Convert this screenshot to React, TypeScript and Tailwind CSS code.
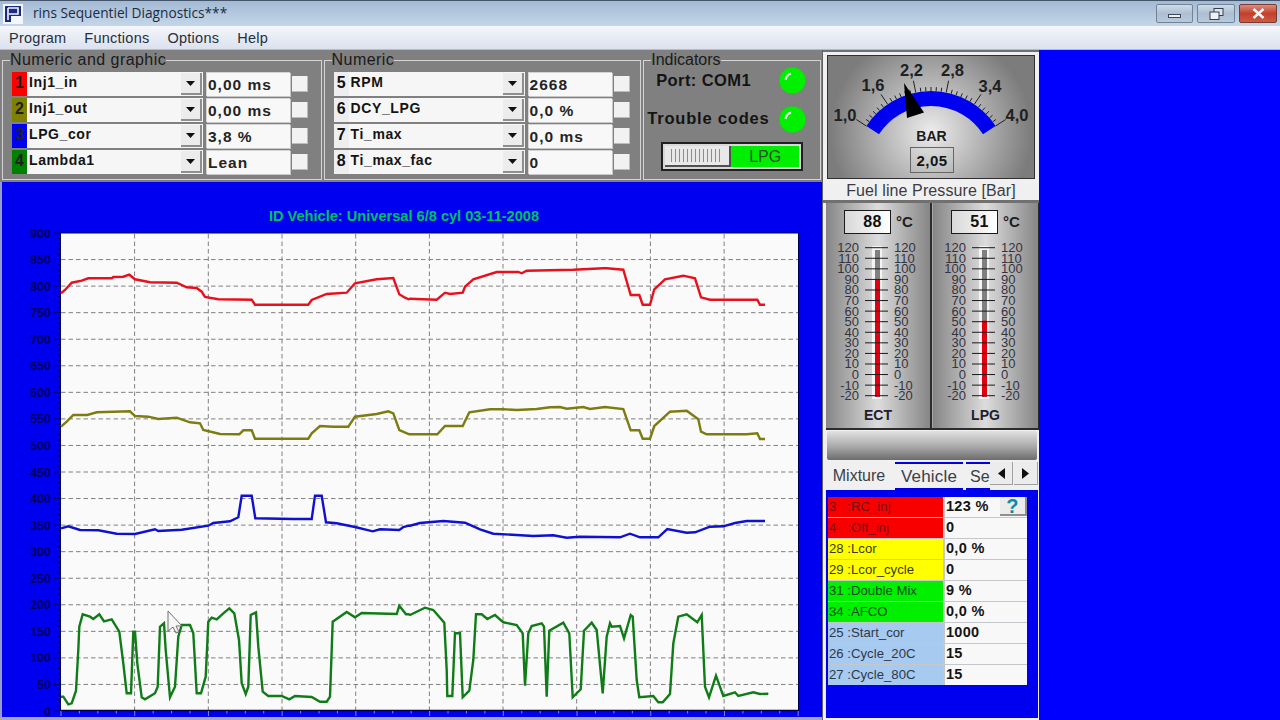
import React from "react";

const F = "font-['Liberation_Sans',Arial,sans-serif]";

// chart traces, stored as crop coordinates (x/3, base + y/3)
type P = [number, number][];
const L = (pts: P, base: number) => pts.map(([x, y]) => `${(x / 3).toFixed(1)},${(base + y / 3).toFixed(1)}`);
const R = (pts: P, base: number) => pts.map(([x, y]) => `${(410 + x / 3).toFixed(1)},${(base + y / 3).toFixed(1)}`);

const red = [
  ...L([[183,280],[195,270],[215,248],[245,242],[265,235],[335,235],[340,231],[370,230],[388,224],[405,238],[450,247],[530,248],[560,262],[590,264],[605,275],[615,291],[655,298],[755,299],[765,314],[925,314],[935,300],[980,282],[1040,278],[1065,250],[1130,238],[1180,234],[1198,283],[1215,293],[1226,298]], 200),
  ...R([[0,296],[80,299],[105,278],[120,282],[158,278],[165,260],[190,238],[260,216],[325,216],[335,220],[350,212],[490,209],[580,205],[590,205],[640,209],[662,285],[688,285],[698,314],[720,314],[733,268],[765,238],[820,227],[855,235],[873,292],[900,299],[1042,299],[1050,314],[1065,314]], 200),
].join(" ");

const olive = [
  ...L([[183,680],[200,665],[220,645],[262,645],[290,637],[390,634],[405,648],[445,650],[475,657],[530,653],[570,667],[600,670],[610,690],[660,702],[718,703],[730,691],[755,691],[765,716],[925,716],[935,700],[960,678],[1000,680],[1045,680],[1065,650],[1130,642],[1165,634],[1180,640],[1198,690],[1226,702]], 200),
  ...R([[0,703],[82,703],[105,678],[158,678],[178,637],[240,628],[280,628],[320,630],[380,627],[420,622],[450,621],[470,626],[520,621],[540,627],[585,621],[640,627],[662,691],[688,691],[698,716],[720,716],[733,678],[780,635],[830,632],[865,658],[873,695],[890,703],[1010,703],[1042,700],[1050,717],[1065,717]], 200),
].join(" ");

const blue = [
  ...L([[183,205],[205,199],[240,210],[295,211],[350,221],[405,222],[465,208],[475,213],[545,209],[625,197],[640,189],[690,184],[715,172],[725,107],[755,107],[766,175],[880,177],[935,177],[945,107],[965,107],[978,187],[1010,190],[1065,201],[1118,214],[1140,208],[1198,210],[1210,201],[1226,197]], 460),
  ...R([[0,197],[30,189],[100,183],[165,188],[210,208],[250,221],[370,228],[430,226],[470,233],[510,230],[630,232],[660,221],[690,232],[745,232],[772,207],[830,218],[855,217],[900,200],[940,199],[975,189],[1010,183],[1065,183]], 460),
].join(" ");

const green = [
  ...L([[183,710],[190,710],[205,733],[215,730],[228,692],[235,570],[238,500],[248,463],[270,470],[280,477],[298,463],[312,484],[335,478],[358,515],[370,610],[380,700],[393,700],[400,515],[405,515],[412,610],[425,712],[435,718],[465,700],[473,680],[480,500],[492,490],[497,570],[510,712],[525,680],[535,530],[545,495],[570,495],[580,520],[590,700],[603,700],[617,650],[625,485],[635,473],[650,478],[670,460],[688,445],[703,460],[717,540],[725,670],[737,702],[745,680],[752,465],[768,457],[775,560],[788,695],[805,708],[845,708],[868,718],[885,708],[935,711],[960,725],[980,725],[990,710],[995,570],[998,485],[1040,456],[1065,472],[1085,459],[1190,462],[1198,437],[1218,463],[1226,463]], 460),
  ...R([[0,465],[45,443],[70,450],[103,488],[110,630],[112,708],[127,708],[135,520],[150,520],[158,712],[178,692],[190,600],[198,463],[215,463],[232,477],[255,465],[280,487],[320,495],[338,520],[345,677],[355,520],[365,498],[395,490],[402,500],[410,710],[418,512],[460,488],[478,520],[488,712],[512,688],[522,512],[545,488],[560,510],[578,700],[590,530],[600,490],[605,500],[630,498],[642,535],[662,465],[668,470],[680,660],[688,712],[730,708],[745,727],[758,727],[780,702],[790,550],[805,470],[830,463],[862,487],[875,465],[885,680],[897,712],[918,647],[940,708],[975,697],[985,708],[1030,697],[1050,702],[1075,701]], 460),
].join(" ");

const yVal = (v: number) => 711 - (v / 900) * 478;
const gridX = [134.6, 208.3, 282, 355.7, 429.4, 503, 576.7, 650.4, 724.1];

function Chart() {
  const ys = Array.from({ length: 19 }, (_, i) => i * 50);
  return (
    <svg viewBox="0 182 822 535" className="block h-[535px] w-[822px]">
      <text x="404" y="220.5" textAnchor="middle" fontFamily="'Liberation Sans',Arial,sans-serif" fontWeight="700" fontSize="14.6" fill="#00c060">
        ID Vehicle: Universal 6/8 cyl 03-11-2008
      </text>
      <rect x="61" y="233" width="737" height="477" fill="#fafafa" />
      {ys.slice(1, 18).map((v) => (
        <line key={v} x1="61" x2="798" y1={yVal(v)} y2={yVal(v)} stroke="#808080" strokeWidth="1" strokeDasharray="4.5 3" />
      ))}
      {gridX.map((x) => (
        <line key={x} x1={x} x2={x} y1="234" y2="710" stroke="#808080" strokeWidth="1" strokeDasharray="4.5 3" />
      ))}
      <path d="M60.5 710V233H798.5V710" fill="none" stroke="#000050" strokeWidth="1" />
      <line x1="60" x2="799" y1="710.5" y2="710.5" stroke="#000040" strokeWidth="1.5" />
      {Array.from({ length: 91 }, (_, i) => {
        const y = 711 - (i * 478) / 90;
        return <line key={i} x1={i % 5 === 0 ? 54 : 57} x2="61" y1={y} y2={y} stroke="#000060" strokeWidth="1" />;
      })}
      {ys.map((v) => (
        <text key={v} x="51" y={yVal(v) + 4.5} textAnchor="end" fontFamily="'Liberation Sans',Arial,sans-serif" fontWeight="700" fontSize="12.5" fill="#000060">
          {v}
        </text>
      ))}
      {Array.from({ length: 41 }, (_, i) => {
        const x = 61 + i * 18.43;
        return <line key={i} x1={x} x2={x} y1="711" y2={i % 4 === 0 ? 716 : 713.5} stroke="#8080ff" strokeWidth="1" />;
      })}
      <polyline points={red} fill="none" stroke="#e8101c" strokeWidth="2.4" />
      <polyline points={olive} fill="none" stroke="#7c7c10" strokeWidth="2.4" />
      <polyline points={blue} fill="none" stroke="#1010d0" strokeWidth="2.4" />
      <polyline points={green} fill="none" stroke="#107c18" strokeWidth="2.4" />
      <path d="M168 611L168 631L173 627L176 633L179 632L176 626L182 626Z" fill="#f4f4f4" fillOpacity="0.7" stroke="#707070" strokeWidth="1" />
    </svg>
  );
}

function Combo({ idx, color, name, value, dark }: { idx: string; color: string; name: string; value: string; dark?: boolean }) {
  return (
    <div className="flex h-[24px] items-stretch">
      <div className={`flex w-[15px] items-center justify-center pb-[2px] text-[16px] font-bold ${color} ${dark ? "text-[#101010]" : "text-[#202020]"}`}>{idx}</div>
      <div className="flex w-[176px] items-center justify-between bg-[#f6f6f6] pl-[2px] pr-[1px]">
        <span className="pb-[3px] text-[14px] font-bold tracking-[0.6px] text-[#141414]">{name}</span>
        <div className="flex h-[22px] w-[21px] items-center justify-center border-r-2 border-b-2 border-[#8e8e8e] bg-[#ececec]">
          <svg width="9" height="5" viewBox="0 0 9 5"><path d="M0 0H9L4.5 5Z" fill="#101010" /></svg>
        </div>
      </div>
      <div className="ml-[3px] flex w-[84px] items-center border-t border-l border-[#d4d4d4] bg-[#f8f8f8] pl-[1px] text-[15.5px] font-bold tracking-[1px] text-[#242424] shadow-[1px_1px_0_#c8c8c8]">
        {value}
      </div>
      <div className="ml-[2px] flex items-center">
        <div className="h-[16px] w-[16px] border-r border-b border-[#bdbdbd] bg-[#f2f2f2]" />
      </div>
    </div>
  );
}

function Group({ title, width, children, tracking }: { title: string; width: string; children: React.ReactNode; tracking?: string }) {
  return (
    <div className={`relative h-[120px] border border-[#d4d4d4] ${width}`}>
      <span className={`absolute top-[-10px] left-[7px] bg-[#808080] text-[16px] leading-[18px] text-[#1a1a1a] ${tracking ?? ""}`}>{title}</span>
      {children}
    </div>
  );
}

function Led() {
  return (
    <svg width="29" height="29" viewBox="0 0 29 29">
      <circle cx="14.5" cy="14.5" r="13.5" fill="#00f000" stroke="#5c9a5c" strokeWidth="1" />
      <path d="M7.5 14C8 11 10 8.5 13 7.5" fill="none" stroke="#f0fff0" strokeWidth="2.2" />
    </svg>
  );
}

function Gauge() {
  const cx = 931, cy = 168;
  const pol = (deg: number, r: number) => {
    const a = (deg * Math.PI) / 180;
    return [cx + r * Math.sin(a), cy - r * Math.cos(a)];
  };
  const [ax, ay] = pol(-57, 69.5);
  const [bx, by] = pol(57, 69.5);
  const labels: [string, number, number][] = [
    ["1,0", 845, 121], ["1,6", 873, 91], ["2,2", 911.5, 76], ["2,8", 952.5, 76], ["3,4", 990, 92], ["4,0", 1017, 121],
  ];
  return (
    <svg viewBox="827 55 208 124" className="block h-[124px] w-[208px]" fontFamily="'Liberation Sans',Arial,sans-serif">
      <path d={`M${ax} ${ay}A69.5 69.5 0 0 1 ${bx} ${by}`} fill="none" stroke="#0000f0" strokeWidth="15" />
      {Array.from({ length: 31 }, (_, i) => {
        const d = -57 + i * 3.8;
        const major = i % 6 === 0;
        const [x1, y1] = pol(d, 77);
        const [x2, y2] = pol(d, major ? 89 : 81);
        return <line key={i} x1={x1} y1={y1} x2={x2} y2={y2} stroke="#202020" strokeWidth="1" />;
      })}
      {labels.map(([t, x, y]) => (
        <text key={t} x={x} y={y} textAnchor="middle" fontWeight="700" fontSize="16.5" fill="#202020">{t}</text>
      ))}
      <polygon points="904,83 907,118 924,112.5" fill="#000" />
      <text x="931.5" y="141" textAnchor="middle" fontWeight="700" fontSize="14" fill="#1c1c1c">BAR</text>
      <rect x="910.5" y="147.5" width="43" height="25" fill="none" stroke="#666" strokeWidth="1" />
      <text x="932" y="165.5" textAnchor="middle" fontWeight="700" fontSize="15" letterSpacing="0.5" fill="#141414">2,05</text>
    </svg>
  );
}

function Thermo({ val, top, name, w }: { val: string; top: number; name: string; w: string }) {
  const ticks = [120, 110, 100, 90, 80, 70, 60, 50, 40, 30, 20, 10, 0, -10, -20];
  const yOf = (i: number) => 44.7 + (i * 148) / 14;
  return (
    <div className={`flex h-[225px] flex-col bg-[linear-gradient(90deg,#868686,#dcdcdc_50%,#868686)] ${w}`}>
      <div className="flex h-[31px] items-end pl-[18px]">
        <div className="flex h-[24px] w-[47px] items-center justify-end border border-[#1a1a1a] bg-[linear-gradient(90deg,#d8d8d8,#ffffff)] pr-[8px] text-[16px] font-bold tracking-[0.5px] text-[#101010]">{val}</div>
        <span className="ml-[5px] h-[24px] text-[15px] leading-[24px] font-bold text-[#202020]">°C</span>
      </div>
      <svg viewBox="0 31 104 171" className="block h-[171px] w-[104px]" fontFamily="'Liberation Sans',Arial,sans-serif">
        <rect x="46" y="43" width="10" height="153" fill="#f4f4f4" />
        <rect x="49" y="47" width="5" height="147" fill="#808080" />
        <rect x="49" y={top} width="5" height={193.5 - top} fill="#e00010" />
        {ticks.map((t, i) => (
          <g key={t}>
            <line x1="39" x2="62" y1={yOf(i)} y2={yOf(i)} stroke="#1a1a1a" strokeWidth="1" />
            <text x="33" y={yOf(i) + 4.5} textAnchor="end" fontSize="13" fill="#343440">{t}</text>
            <text x="68" y={yOf(i) + 4.5} fontSize="13" fill="#343440">{t}</text>
          </g>
        ))}
      </svg>
      <div className="text-center text-[14px] leading-[20px] font-bold text-[#20202c]">{name}</div>
    </div>
  );
}

const rows = [
  { a: "3   :RC_inj", b: "123 %", c: "bg-[#f80000]", t: "text-[#7a1010]", help: true },
  { a: "4   :Off_inj", b: "0", c: "bg-[#f80000]", t: "text-[#7a1010]" },
  { a: "28 :Lcor", b: "0,0 %", c: "bg-[#ffff00]", t: "text-[#3a3a10]" },
  { a: "29 :Lcor_cycle", b: "0", c: "bg-[#ffff00]", t: "text-[#3a3a10]" },
  { a: "31 :Double Mix", b: "9 %", c: "bg-[#00f000]", t: "text-[#184a20]" },
  { a: "34 :AFCO", b: "0,0 %", c: "bg-[#00f000]", t: "text-[#184a20]" },
  { a: "25 :Start_cor", b: "1000", c: "bg-[#a6caf0]", t: "text-[#303848]" },
  { a: "26 :Cycle_20C", b: "15", c: "bg-[#a6caf0]", t: "text-[#303848]" },
  { a: "27 :Cycle_80C", b: "15", c: "bg-[#a6caf0]", t: "text-[#303848]" },
];

export default function App() {
  return (
    <div className={`flex h-[720px] w-[1280px] flex-col overflow-hidden bg-[#0000ff] ${F}`}>
      {/* title bar */}
      <div className="flex h-[26px] items-center border-t border-[#45566a] bg-[linear-gradient(180deg,#a3bad4,#c4d6e9)]">
        <div className="ml-[3px] flex h-[20px] w-[20px] items-center justify-center bg-[#f4f6fa]">
          <svg width="18" height="18" viewBox="0 0 18 18">
            <path d="M1 1H17V11H7V17H1Z" fill="#1c2a80" />
            <path d="M4 3V15M4 3H14V9H5" fill="none" stroke="#f4f6fa" strokeWidth="1.6" />
          </svg>
        </div>
        <span className="ml-[10px] font-['Open_Sans',sans-serif] text-[13.7px] text-[#1c2c3e]">rins Sequentiel Diagnostics***</span>
        <div className="ml-auto mr-[3px] flex gap-[4px]">
          <div className="flex h-[19px] w-[37px] items-end justify-center rounded-[2px] border border-[#6f8499] bg-[linear-gradient(180deg,#cfdbe8,#aebfd2_50%,#b8c9db)] pb-[4px]">
            <div className="h-[4px] w-[13px] border border-[#3a4a5c] bg-[#f0f0f0]" />
          </div>
          <div className="flex h-[19px] w-[38px] items-center justify-center rounded-[2px] border border-[#6f8499] bg-[linear-gradient(180deg,#cfdbe8,#aebfd2_50%,#b8c9db)]">
            <svg width="15" height="12" viewBox="0 0 15 12">
              <rect x="5" y="0.5" width="9" height="7" fill="#dfe6ee" stroke="#33404e" />
              <rect x="1" y="4" width="9" height="7.5" fill="#eef2f6" stroke="#33404e" />
            </svg>
          </div>
          <div className="flex h-[19px] w-[38px] items-center justify-center rounded-[2px] border border-[#7b3a30] bg-[linear-gradient(180deg,#dc8d7c,#c2402c_50%,#cd5c42)]">
            <svg width="13" height="11" viewBox="0 0 13 11"><path d="M1.5 1L11.5 10M11.5 1L1.5 10" stroke="#f8f4f2" strokeWidth="2.6" /></svg>
          </div>
        </div>
      </div>
      {/* menu */}
      <div className="flex h-[24px] items-center gap-[18px] border-b border-[#b4bccc] bg-[linear-gradient(180deg,#f4f6fa,#dbe1ee)] pt-[2px] pl-[9px] text-[14.5px] tracking-[0.25px] text-[#26303c]">
        <span>Program</span>
        <span>Functions</span>
        <span>Options</span>
        <span>Help</span>
      </div>

      <div className="flex h-[670px]">
        {/* left column */}
        <div className="flex w-[822px] flex-col">
          <div className="flex h-[132px] gap-[2px] bg-[#808080] pt-[10px] pl-[2px] pr-[1px]">
            <Group title="Numeric and graphic" width="w-[320px]" tracking="tracking-[0.45px]">
              <div className="flex flex-col gap-[2px] pt-[11px] pl-[9px]">
                <Combo idx="1" color="bg-[#ff0000]" name="Inj1_in" value="0,00 ms" />
                <Combo idx="2" color="bg-[#808000]" name="Inj1_out" value="0,00 ms" />
                <Combo idx="3" color="bg-[#0000f0]" name="LPG_cor" value="3,8 %" />
                <Combo idx="4" color="bg-[#008000]" name="Lambda1" value="Lean" />
              </div>
            </Group>
            <Group title="Numeric" width="w-[318px]" tracking="tracking-[0.45px]">
              <div className="flex flex-col gap-[2px] pt-[11px] pl-[9px]">
                <Combo idx="5" color="bg-[#eeeeee]" name="RPM" value="2668" dark />
                <Combo idx="6" color="bg-[#eeeeee]" name="DCY_LPG" value="0,0 %" dark />
                <Combo idx="7" color="bg-[#eeeeee]" name="Ti_max" value="0,0 ms" dark />
                <Combo idx="8" color="bg-[#eeeeee]" name="Ti_max_fac" value="0" dark />
              </div>
            </Group>
            <Group title="Indicators" width="w-[178px]">
              <div className="flex flex-col gap-[9px] pt-[5px]">
                <div className="flex h-[29px] items-center pl-[12px] text-[16.5px] font-bold tracking-[0.4px] text-[#141414]">
                  <span>Port: COM1</span>
                </div>
                <div className="flex h-[29px] items-center pl-[3px] text-[16.5px] font-bold tracking-[0.8px] whitespace-nowrap text-[#141414]">
                  <span>Trouble codes</span>
                </div>
              </div>
              <div className="absolute top-[5px] left-[134px]"><Led /></div>
              <div className="absolute top-[44px] left-[134px]"><Led /></div>
              <div className="absolute top-[81px] left-[17px] flex h-[29px] w-[142px] border-2 border-[#202020] bg-[#d8d8d8] p-[2px]">
                <div className="flex w-[66px] items-center justify-center border-r-2 border-b-2 border-[#505050] bg-[#e8e8e8]">
                  <div className="h-[13px] w-[52px] bg-[repeating-linear-gradient(90deg,#8c8c8c_0,#8c8c8c_1px,#e8e8e8_1px,#e8e8e8_4px)]" />
                </div>
                <div className="flex flex-1 items-center justify-center bg-[#00ee00] text-[16px] text-[#2c4a2c]">LPG</div>
              </div>
            </Group>
          </div>
          <div className="h-[535px] border-l-2 border-[#9a9ac8] bg-[#0000f0]">
            <div className="-ml-[2px]"><Chart /></div>
          </div>
          <div className="h-[3px] bg-[#a8a8a8]" />
        </div>

        {/* right column */}
        <div className="flex w-[217px] flex-col border-l border-[#606060] bg-[#f0f0f0]">
          <div className="h-[5px] border-t-2 border-[#707070]" />
          <div className="ml-[4px] w-[208px] bg-[radial-gradient(circle_at_50%_62%,#ececec,#7c7c7c_78%)] shadow-[inset_0_0_0_1px_#303030]">
            <Gauge />
          </div>
          <div className="h-[21px] text-center text-[16px] leading-[23px] tracking-[0.1px] text-[#3c3c44]">Fuel line Pressure [Bar]</div>
          <div className="h-[3px] bg-[#707070]" />
          <div className="ml-[3px] flex h-[227px] gap-[2px] border-b-2 border-[#2c2c2c] bg-[#2c2c2c]">
            <Thermo val="88" top={77} name="ECT" w="w-[104px]" />
            <div className="border-l border-[#a8a8a8]">
              <Thermo val="51" top={117.7} name="LPG" w="w-[105px]" />
            </div>
          </div>
          <div className="mt-[1px] ml-[4px] h-[29px] w-[210px] rounded-[2px] bg-[linear-gradient(180deg,#e2e2e2,#a8a8a8_55%,#6c6c6c)]" />
          <div className="mt-[2px] flex h-[28px] items-stretch pl-[2px] text-[16px] text-[#3a4048]">
            <div className="flex w-[68px] items-center justify-center pb-[1px]">Mixture</div>
            <div className="ml-[2px] flex w-[68px] items-center justify-center border-t-2 border-b-2 border-[#0000e0] pt-[2px] text-[17px] tracking-[0.2px]">Vehicle</div>
            <div className="ml-[3px] w-[24px] border-t-2 border-b-2 border-[#0000e0] pl-[4px] text-[16px] leading-[26px]">Se</div>
            <div className="flex h-[23px] w-[23px] items-center justify-center border-r border-b border-[#a0a0a0] bg-[#ececec]">
              <svg width="7" height="11" viewBox="0 0 7 11"><path d="M7 0V11L0 5.5Z" fill="#101010" /></svg>
            </div>
            <div className="ml-[1px] flex h-[23px] w-[24px] items-center justify-center border-r border-b border-[#a0a0a0] bg-[#ececec]">
              <svg width="7" height="11" viewBox="0 0 7 11"><path d="M0 0V11L7 5.5Z" fill="#101010" /></svg>
            </div>
          </div>
          <div className="ml-[2px] h-[228px] w-[213px] border-l border-[#e8e8e8] bg-[#0000f0] pt-[7px] pl-[2px]">
            <div className="grid h-[188px] w-[199px] grid-cols-[115px_1fr] grid-rows-9 gap-x-[2px] gap-y-px bg-[#c4c8cc]">
              {rows.map((r) => (
                <React.Fragment key={r.a}>
                  <div className={`flex items-center pb-[1px] pl-[1px] text-[13.2px] whitespace-pre ${r.c} ${r.t}`}>{r.a}</div>
                  <div className="flex items-center justify-between bg-[#f8f8f8] pb-[1px] pl-[1px] text-[14.5px] font-bold tracking-[0.3px] text-[#141414]">
                    <span>{r.b}</span>
                    {r.help && (
                      <div className="flex h-full w-[27px] items-center justify-center border-r-2 border-b-2 border-[#909090] bg-[#ececec] text-[20px] leading-none font-bold text-[#108aa0]">?</div>
                    )}
                  </div>
                </React.Fragment>
              ))}
            </div>
          </div>
        </div>
        <div className="flex-1 bg-[#0000ff]" />
      </div>
    </div>
  );
}
